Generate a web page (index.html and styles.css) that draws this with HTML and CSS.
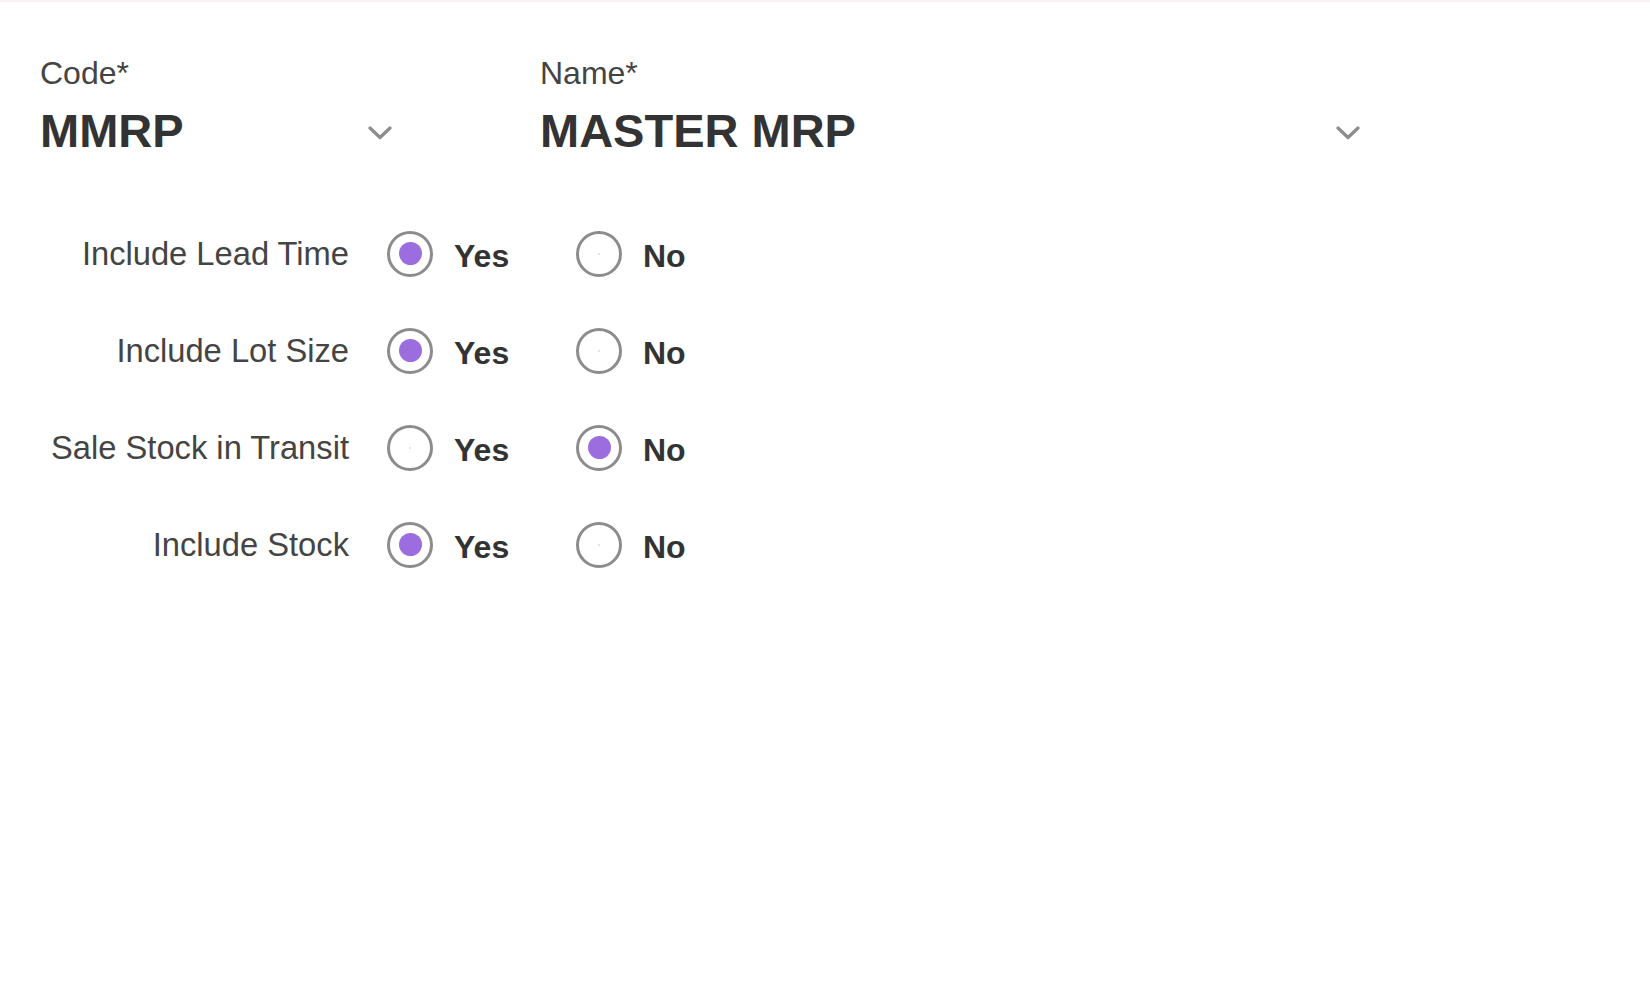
FILE: index.html
```html
<!DOCTYPE html>
<html lang="en">
<head>
<meta charset="utf-8">
<title>MRP Settings</title>
<link rel="stylesheet" href="styles.css">
</head>
<body>
<div class="topline"></div>
<main class="form">
  <section class="header">
    <div class="field field-code">
      <div class="field-label">Code*</div>
      <div class="field-value">
        <span class="value-text">MMRP</span>
        <svg class="chevron" width="24" height="14" viewBox="0 0 24 14"><polyline points="2,2 12,11.5 22,2" fill="none" stroke="#8c8c8c" stroke-width="3.2" stroke-linecap="round" stroke-linejoin="round"/></svg>
      </div>
    </div>
    <div class="field field-name">
      <div class="field-label">Name*</div>
      <div class="field-value">
        <span class="value-text">MASTER MRP</span>
        <svg class="chevron" width="24" height="14" viewBox="0 0 24 14"><polyline points="2,2 12,11.5 22,2" fill="none" stroke="#8c8c8c" stroke-width="3.2" stroke-linecap="round" stroke-linejoin="round"/></svg>
      </div>
    </div>
  </section>

  <section class="rows">
    <div class="row">
      <div class="row-label">Include Lead Time</div>
      <label class="opt"><span class="radio checked"></span><span class="opt-text">Yes</span></label>
      <label class="opt"><span class="radio"></span><span class="opt-text">No</span></label>
    </div>
    <div class="row">
      <div class="row-label">Include Lot Size</div>
      <label class="opt"><span class="radio checked"></span><span class="opt-text">Yes</span></label>
      <label class="opt"><span class="radio"></span><span class="opt-text">No</span></label>
    </div>
    <div class="row">
      <div class="row-label">Sale Stock in Transit</div>
      <label class="opt"><span class="radio"></span><span class="opt-text">Yes</span></label>
      <label class="opt"><span class="radio checked"></span><span class="opt-text">No</span></label>
    </div>
    <div class="row">
      <div class="row-label">Include Stock</div>
      <label class="opt"><span class="radio checked"></span><span class="opt-text">Yes</span></label>
      <label class="opt"><span class="radio"></span><span class="opt-text">No</span></label>
    </div>
  </section>
</main>
</body>
</html>
```

FILE: styles.css
```css
html, body {
  margin: 0;
  padding: 0;
  background: #ffffff;
}

body {
  font-family: "Liberation Sans", Arial, sans-serif;
  color: #333333;
}

.topline {
  height: 2px;
  background: #fcf0f7;
}

.form {
  padding: 53px 0 0 40px;
}

.header {
  display: flex;
  gap: 140px;
}

.field-code {
  width: 360px;
}

.field-name {
  width: 830px;
}

.field-label {
  font-size: 32px;
  line-height: 36px;
  color: #444444;
}

.field-value {
  margin-top: 12px;
  display: flex;
  align-items: center;
  justify-content: space-between;
  height: 56px;
}

.field-code .field-value {
  padding-right: 8px;
}

.field-name .field-value {
  padding-right: 10px;
}

.value-text {
  font-size: 47px;
  line-height: 56px;
  font-weight: bold;
  color: #333333;
}

.chevron {
  display: block;
  flex: none;
  margin-top: 4px;
}

.rows {
  margin-top: 46px;
}

.row {
  display: flex;
  align-items: center;
  height: 97px;
}

.row-label {
  width: 309px;
  margin-right: 38px;
  text-align: right;
  font-size: 32.7px;
  line-height: 36px;
  color: #444444;
}

.opt {
  width: 189px;
  display: flex;
  align-items: center;
  gap: 21px;
}

.radio {
  box-sizing: border-box;
  width: 46px;
  height: 46px;
  border: 3px solid #8c8c8c;
  border-radius: 50%;
  display: flex;
  align-items: center;
  justify-content: center;
  flex: none;
}

.radio::after {
  content: "";
  width: 2px;
  height: 2px;
  border-radius: 50%;
  background: #e2d6f5;
}

.radio.checked::after {
  width: 23px;
  height: 23px;
  background: #9b6ddf;
}

.opt-text {
  font-size: 32px;
  line-height: 36px;
  font-weight: bold;
  color: #333333;
  padding-top: 4px;
}
```
